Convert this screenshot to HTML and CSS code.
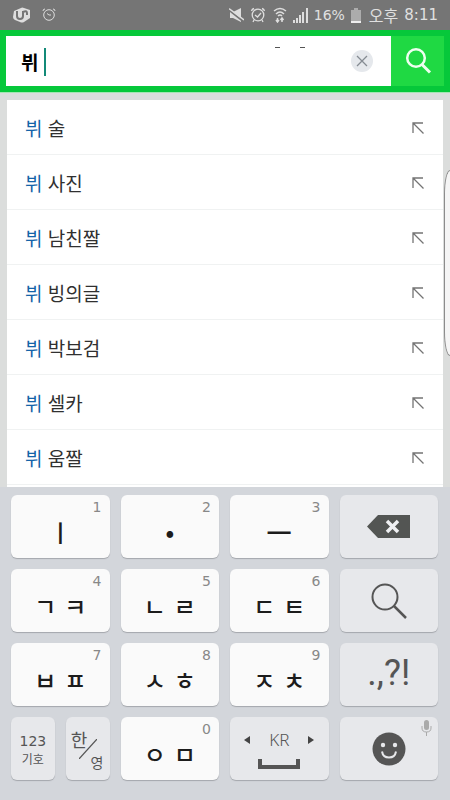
FILE: index.html
```html
<!DOCTYPE html>
<html lang="ko">
<head>
<meta charset="utf-8">
<meta name="viewport" content="width=device-width, initial-scale=1">
<title>뷔</title>
<link rel="stylesheet" href="styles.css">
</head>
<body>
<header class="status">
  <div class="status-group">
    <svg width="18" height="16" viewBox="0 0 18 16" aria-hidden="true"><path d="M1 4L8 1Q9 0 11 1L17 3L17 11L11 15Q9 16 7 15L2 13Q0 12 0 10Z" fill="#dedede"/><path d="M4 4V9Q4 12 7 12Q10 12 10 9V4M10 5Q14 3 14 6V8" fill="none" stroke="#757575" stroke-width="2"/></svg>
    <svg class="alarm-left" width="14" height="14" viewBox="0 0 14 14" fill="none" stroke="#dedede"><circle cx="7" cy="7" r="5.3"/><path d="M1 3Q1 1 3 1M11 1Q13 1 13 3M5 5.5L7 7H9"/></svg>
  </div>
  <div class="status-group status-right">
    <svg width="15" height="16" viewBox="0 0 15 16"><path d="M1 5H4L12 1V15L4 11H1Z" fill="#dedede"/><path d="M0 3L15 15" stroke="#757575" stroke-width="2"/><path d="M0 1.500L15 13" stroke="#dedede" stroke-width="1.500"/></svg>
    <svg width="16" height="16" viewBox="0 0 16 16" fill="none" stroke="#dedede" stroke-width="1.300"><circle cx="8" cy="8" r="5.800"/><path d="M1.500 4Q2 2 4 1.500M12 1.500Q14 2 14.500 4M5 8L7.500 10L11 6M4 13L3 15M12 13L13 15"/></svg>
    <svg class="wifi" width="14" height="16" viewBox="0 0 14 16" fill="none" stroke="#dedede" stroke-width="1.500"><path d="M1 4Q7-1 13 4M3 7Q7 3 11 7M5 9Q7 7 9 9"/><path d="M4.500 11V15M3 13L4.500 15L6 13M9 15V11M7.500 13L9 11L10.500 13"/></svg>
    <svg width="15" height="15" viewBox="0 0 15 15" fill="#dedede"><path d="M0 12H2V15H0ZM3 10H5V15H3ZM6 7H8V15H6ZM9 4H11V15H9ZM13 0H15V15H13Z"/></svg>
    <span class="battery-text">16%</span>
    <svg class="battery" width="10" height="15" viewBox="0 0 10 15"><path d="M3 0H7V2H10V15H0V2H3Z" fill="#acacac"/><path d="M0 13H10V15H0Z" fill="#efefef"/></svg>
    <span class="meridiem">오후</span><time class="clock">8:11</time>
  </div>
</header>
<form class="search" role="search">
  <div class="field">
    <input class="query" type="text" value="뷔" aria-label="검색어">
    <span class="caret"></span>
    <span class="dashes"><i></i><i></i></span>
    <button class="clear" type="button" aria-label="지우기"><svg width="12" height="12" viewBox="0 0 12 12"><path d="M1 1L11 11M11 1L1 11" stroke="#858b92" stroke-width="1.300"/></svg></button>
  </div>
  <button class="submit" type="submit" aria-label="검색"><svg width="28" height="28" viewBox="0 0 28 28" fill="none" stroke="#effff0" stroke-width="2.500"><circle cx="12" cy="11" r="8.800"/><path d="M18 17.500L26 25.500" stroke-width="3"/></svg></button>
</form>
<main class="content">
  <ul class="suggestions">
    <li><a href="#"><span><b>뷔</b> 술</span><svg class="arrow" viewBox="0 0 12 12"><path d="M1 11V1H11M1 1L11.500 11.500"/></svg></a></li>
    <li><a href="#"><span><b>뷔</b> 사진</span><svg class="arrow" viewBox="0 0 12 12"><path d="M1 11V1H11M1 1L11.500 11.500"/></svg></a></li>
    <li><a href="#"><span><b>뷔</b> 남친짤</span><svg class="arrow" viewBox="0 0 12 12"><path d="M1 11V1H11M1 1L11.500 11.500"/></svg></a></li>
    <li><a href="#"><span><b>뷔</b> 빙의글</span><svg class="arrow" viewBox="0 0 12 12"><path d="M1 11V1H11M1 1L11.500 11.500"/></svg></a></li>
    <li><a href="#"><span><b>뷔</b> 박보검</span><svg class="arrow" viewBox="0 0 12 12"><path d="M1 11V1H11M1 1L11.500 11.500"/></svg></a></li>
    <li><a href="#"><span><b>뷔</b> 셀카</span><svg class="arrow" viewBox="0 0 12 12"><path d="M1 11V1H11M1 1L11.500 11.500"/></svg></a></li>
    <li><a href="#"><span><b>뷔</b> 움짤</span><svg class="arrow" viewBox="0 0 12 12"><path d="M1 11V1H11M1 1L11.500 11.500"/></svg></a></li>
  </ul>
  <span class="edge-handle"></span>
</main>
<section class="keyboard" aria-label="키보드">
  <button class="key"><small>1</small><span class="jamo">ㅣ</span></button>
  <button class="key"><small>2</small><span class="jamo dot">·</span></button>
  <button class="key"><small>3</small><span class="jamo wide">ㅡ</span></button>
  <button class="key fn" aria-label="삭제"><svg width="43" height="23" viewBox="0 0 43 23"><path d="M0 11.500L11 0H43V23H11Z" fill="#535553"/><path d="M20 6L31 17M31 6L20 17" stroke="#eff0f2" stroke-width="3.500"/></svg></button>
  <button class="key"><small>4</small><span class="jamo"><span>ㄱ</span><span>ㅋ</span></span></button>
  <button class="key"><small>5</small><span class="jamo"><span>ㄴ</span><span>ㄹ</span></span></button>
  <button class="key"><small>6</small><span class="jamo"><span>ㄷ</span><span>ㅌ</span></span></button>
  <button class="key fn" aria-label="검색"><svg width="36" height="36" viewBox="0 0 36 36" fill="none" stroke="#555" stroke-width="2"><circle cx="14" cy="14" r="12.500"/><path d="M23 23L35 35" stroke-width="2.500"/></svg></button>
  <button class="key"><small>7</small><span class="jamo"><span>ㅂ</span><span>ㅍ</span></span></button>
  <button class="key"><small>8</small><span class="jamo"><span>ㅅ</span><span>ㅎ</span></span></button>
  <button class="key"><small>9</small><span class="jamo"><span>ㅈ</span><span>ㅊ</span></span></button>
  <button class="key fn"><span class="punctuation">.,?!</span></button>
  <div class="pair">
    <button class="key fn symbols"><span>123</span><span class="symbols-ko">기호</span></button>
    <button class="key fn language"><span>한</span><svg width="18" height="20" viewBox="0 0 18 20"><path d="M0 20L18 0" stroke="#555" stroke-width="1.200"/></svg><span class="english">영</span></button>
  </div>
  <button class="key"><small>0</small><span class="jamo"><span>ㅇ</span><span>ㅁ</span></span></button>
  <button class="key fn space"><span class="locale"><svg width="6" height="8" viewBox="0 0 6 8"><path d="M6 0V8L0 4Z" fill="#444"/></svg><span>KR</span><svg width="6" height="8" viewBox="0 0 6 8"><path d="M0 0V8L6 4Z" fill="#444"/></svg></span><svg width="42" height="10" viewBox="0 0 42 10"><path d="M2 0V8H40V0" fill="none" stroke="#555" stroke-width="4"/></svg></button>
  <button class="key fn" aria-label="이모티콘"><svg class="mic" width="11" height="16" viewBox="0 0 11 16"><rect x="3" y="0" width="5" height="10" rx="2.500" fill="#aaa"/><path d="M1 6V8Q1 12 5.500 12Q10 12 10 8V6M5.500 12V16" fill="none" stroke="#aaa"/></svg><svg width="34" height="34" viewBox="0 0 34 34"><circle cx="17" cy="17" r="16.500" fill="#555"/><circle cx="11" cy="13" r="2.200" fill="#e7e8eb"/><circle cx="23" cy="13" r="2.200" fill="#e7e8eb"/><path d="M10 19.500Q11 25.500 17 25.500Q23 25.500 24 19.500" fill="none" stroke="#e7e8eb" stroke-width="2"/></svg></button>
</section>
</body>
</html>
```
FILE: styles.css
```css
* { box-sizing: border-box; }
body {
  margin: 0;
  height: 100vh;
  display: flex;
  flex-direction: column;
  overflow: hidden;
  background: #dbdddc;
  font-family: "Noto Sans CJK KR", sans-serif;
}
button, input { font-family: inherit; border: 0; padding: 0; margin: 0; }
svg { display: block; flex: none; }

.status {
  flex: none;
  height: 30px;
  padding: 0 12px 0 13px;
  display: flex;
  align-items: center;
  justify-content: space-between;
  background: #757575;
  color: #e0e0e0;
}
.status-group { display: flex; align-items: center; gap: 11px; }
.status-right { gap: 6px; }
.wifi { margin-left: 1px; }
.battery-text { font: 14px/30px "DejaVu Sans", sans-serif; }
.battery { margin: 0 2px 0 0; }
.meridiem { font-size: 16px; line-height: 30px; }
.clock { font: 15px/30px "DejaVu Sans", sans-serif; }

.search {
  flex: none;
  margin: 0;
  padding: 6px;
  display: flex;
  background: #06c83a;
  border-bottom: 1px solid #a5e5b3;
}
.field {
  position: relative;
  flex: 1;
  min-width: 0;
  height: 50px;
  padding: 0 18px 0 15px;
  display: flex;
  align-items: center;
  background: #fff;
}
.query {
  flex: 1;
  min-width: 0;
  width: 100%;
  height: 50px;
  background: none;
  color: #000;
  font-size: 19px;
  font-weight: 700;
  outline: 0;
}
.caret { position: absolute; left: 38px; top: 12px; width: 2px; height: 28px; background: #138a78; }
.dashes { position: absolute; right: 86px; top: 11px; display: flex; gap: 20px; }
.dashes i { width: 5px; height: 1px; background: #555; }
.clear {
  flex: none;
  width: 22px;
  height: 22px;
  display: grid;
  place-items: center;
  border-radius: 50%;
  background: #e5e8ec;
}
.submit {
  flex: none;
  width: 53px;
  display: grid;
  place-items: center;
  background: #1fd943;
}

.content {
  position: relative;
  flex: 1;
  min-height: 0;
  padding: 7px 7px 0;
  overflow: hidden;
}
.suggestions {
  margin: 0;
  padding: 0;
  min-height: 100%;
  list-style: none;
  background: #fff;
}
.suggestions a {
  height: 55px;
  padding: 1px 19px 0 18px;
  display: flex;
  align-items: center;
  justify-content: space-between;
  border-bottom: 1px solid #f0f2f2;
  color: #303030;
  font-size: 19px;
  line-height: 54px;
  text-decoration: none;
}
.suggestions b { color: #1463a8; font-weight: 400; }
.arrow { width: 12px; height: 12px; fill: none; stroke: #747474; stroke-width: 1.3; }
.edge-handle {
  position: absolute;
  right: 0;
  top: 77px;
  width: 6px;
  height: 186px;
  border: 1px solid #8c8c8c;
  border-right: 0;
  border-radius: 6px 0 0 6px / 24px 0 0 24px;
  background: #f5f5f5;
}

.keyboard {
  flex: none;
  padding: 8px 12px 20px 11px;
  display: grid;
  grid-template-columns: repeat(4, minmax(0, 1fr));
  gap: 11px;
  background: #d3d6db;
}
.key {
  position: relative;
  width: 100%;
  height: 63px;
  display: flex;
  align-items: center;
  justify-content: center;
  border-radius: 6px;
  background: #fafafa;
  box-shadow: 0 1px 1px #a4a7ac;
  color: #1c1c1c;
}
.fn { background: #e7e8eb; color: #555; }
.key small {
  position: absolute;
  right: 8px;
  top: 4px;
  color: #888;
  font: 14px/16px "DejaVu Sans", sans-serif;
}
.jamo {
  padding-top: 10px;
  display: flex;
  gap: 8px;
  font-size: 24px;
  font-weight: 500;
  line-height: 28px;
}
.dot { font-size: 36px; font-weight: 700; }
.wide { font-size: 28px; }
.punctuation { font: 400 36px/40px Roboto, sans-serif; padding-bottom: 4px; }
.pair { display: grid; grid-template-columns: 1fr 1fr; gap: 11px; }
.symbols { flex-direction: column; font-size: 16px; line-height: 20px; }
.symbols span:first-child { font-family: "DejaVu Sans", sans-serif; font-size: 14px; }
.symbols-ko { font-size: 12px; line-height: 16px; }
.language { font-size: 18px; line-height: 20px; }
.language span:first-child { position: absolute; left: 5px; top: 12px; }
.language .english { position: absolute; right: 6px; bottom: 8px; font-size: 14px; }
.space { flex-direction: column; gap: 8px; }
.locale { display: flex; align-items: center; gap: 20px; font: 300 17px/22px "Noto Sans", sans-serif; }
.locale svg { margin: 0 -1px; }
.mic { position: absolute; right: 6px; top: 3px; }
```
